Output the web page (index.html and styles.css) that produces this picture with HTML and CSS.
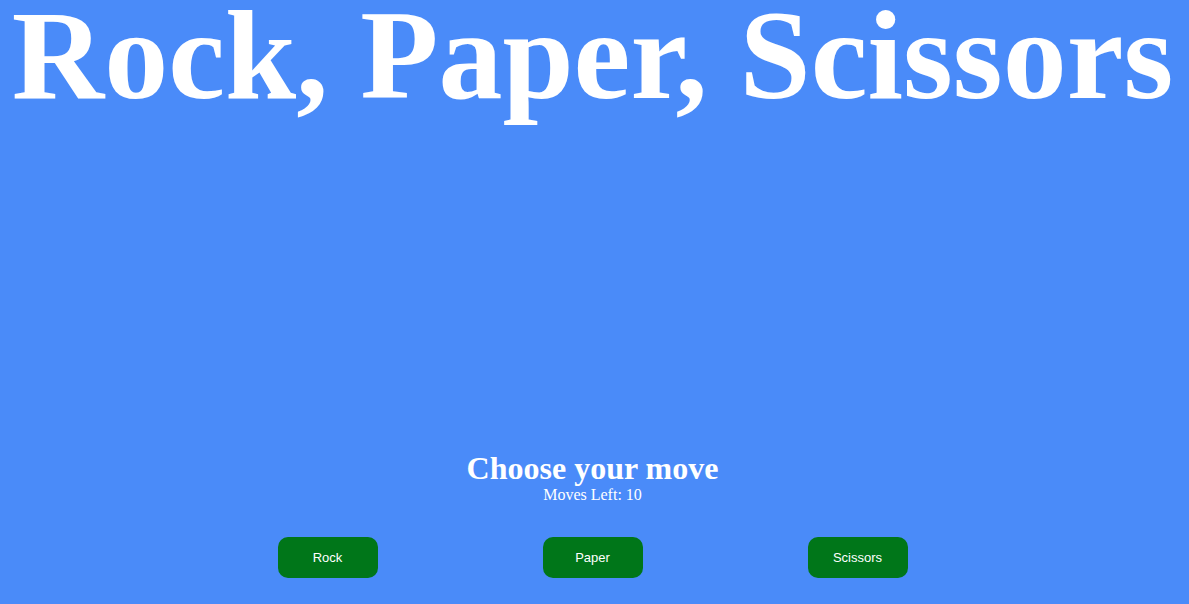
FILE: index.html
```html
<!DOCTYPE html>
<html>
<head>
<meta charset="utf-8">
<link rel="stylesheet" href="styles.css">
</head>
<body>
<div class="page">
  <h1 class="title">Rock, Paper, Scissors</h1>
  <div class="spacer"></div>
  <div class="status">
    <h2 class="prompt">Choose your move</h2>
    <p class="moves">Moves Left: 10</p>
  </div>
  <div class="choices">
    <button class="btn">Rock</button>
    <button class="btn">Paper</button>
    <button class="btn">Scissors</button>
  </div>
</div>
</body>
</html>
```
FILE: styles.css
```css
html, body {
  margin: 0;
  padding: 0;
  background: #4a8bf9;
  height: 100%;
  overflow: hidden;
}
.page {
  display: flex;
  flex-direction: column;
  align-items: center;
  height: 604px;
  padding-right: 4px;
  color: #fff;
  font-family: "Liberation Serif", "Times New Roman", serif;
}
.title {
  margin: 0;
  font-size: 128px;
  line-height: 111px;
  font-weight: bold;
  white-space: nowrap;
  text-align: center;
}
.spacer {
  flex: 1;
}
.status {
  display: flex;
  flex-direction: column;
  align-items: center;
}
.prompt {
  margin: 0;
  font-size: 32px;
  line-height: 36px;
  font-weight: bold;
}
.moves {
  margin: 0;
  font-size: 16px;
  line-height: 18px;
}
.choices {
  display: flex;
  gap: 165px;
  margin-top: 33px;
  margin-bottom: 26px;
}
.btn {
  width: 100px;
  height: 41px;
  border: none;
  border-radius: 10px;
  background: #007619;
  color: #fff;
  font-family: "Liberation Sans", Arial, sans-serif;
  font-size: 13px;
  padding: 0;
}
```
